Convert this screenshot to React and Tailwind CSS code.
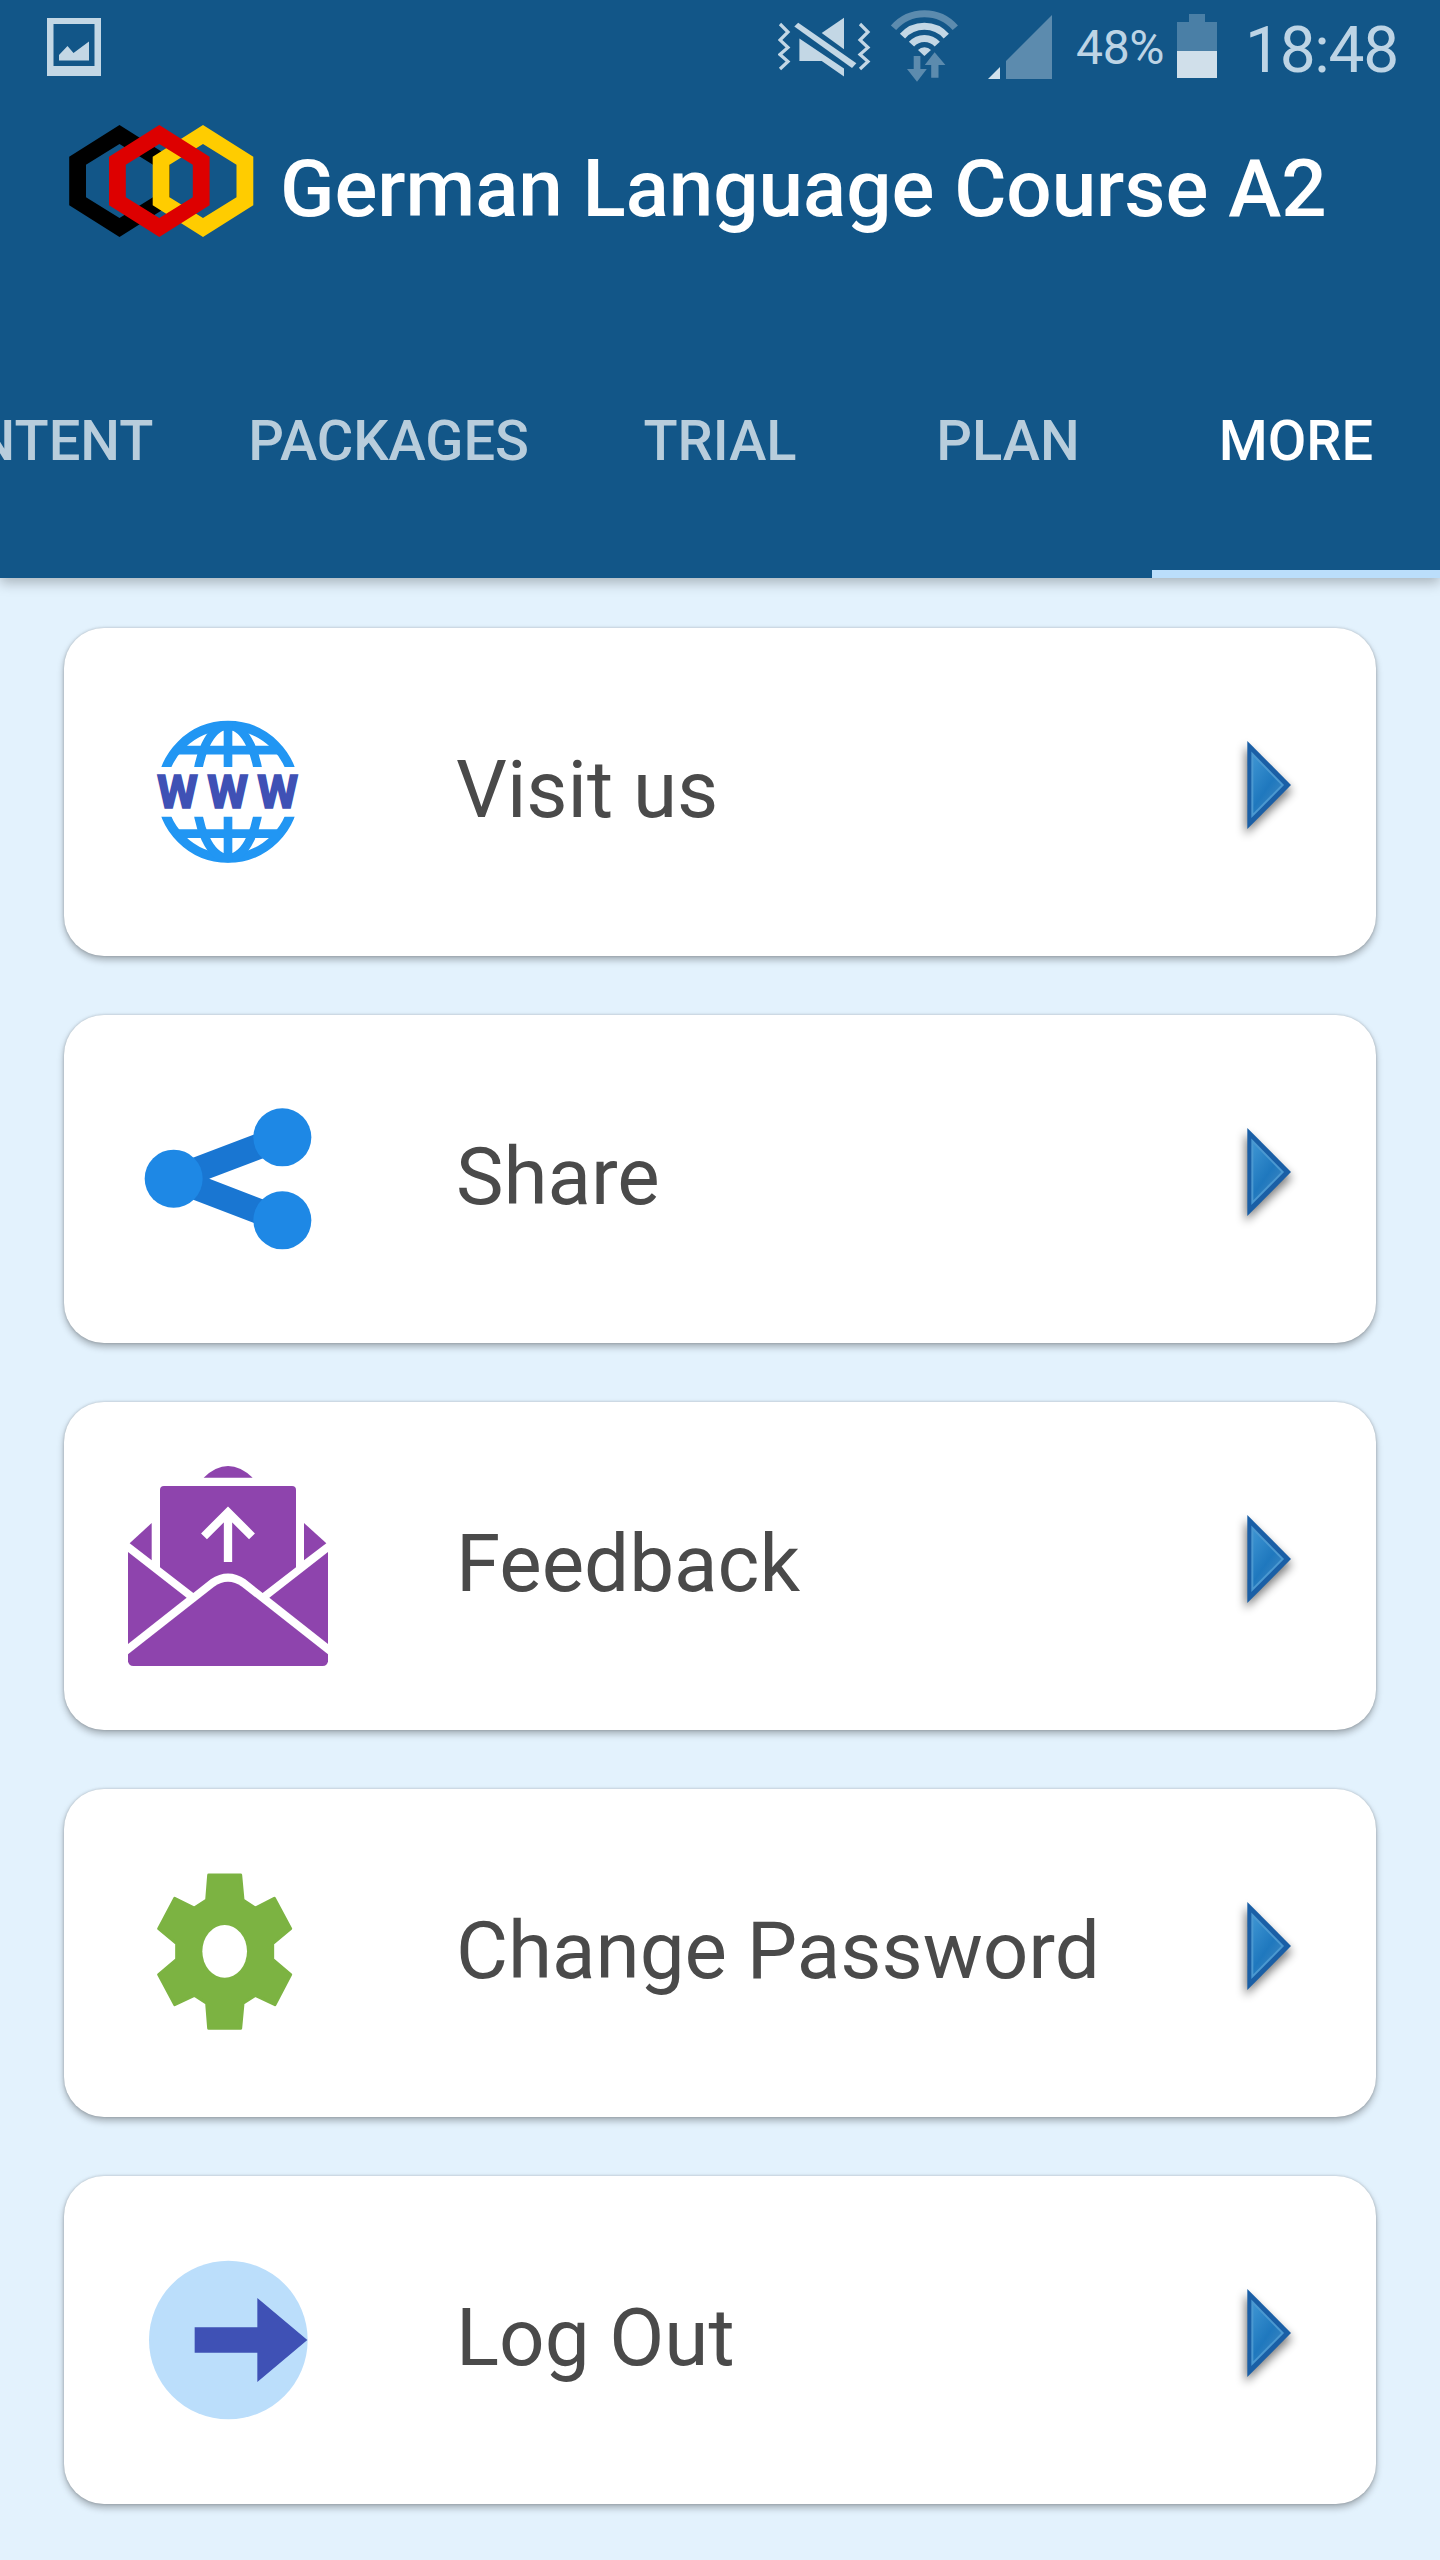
// src/App.jsx
const TABS = [
  { label: 'CONTENT', width: 'pl-12 pr-[47px]' },
  { label: 'PACKAGES', width: 'pl-12 pr-[47px]' },
  { label: 'TRIAL', width: 'w-72' },
  { label: 'PLAN', width: 'w-72' },
  { label: 'MORE', width: 'w-72', active: true },
];

function GalleryIcon() {
  return (
    <svg viewBox="0 0 54 58" className="w-[54px] h-[58px] ml-[46.5px] mt-[18px]" fill="#c3d7e5">
      <path fillRule="evenodd" d="M0 0H54V58H0ZM6.5 6V48H47.5V6Z" />
      <path d="M12 42.5V37L20.5 28L26.5 35L42 23.5V42.5Z" />
    </svg>
  );
}

function MuteIcon() {
  return (
    <svg viewBox="778 16 93 62" className="w-[93px] h-[62px] ml-[677.5px] mt-4" fill="#c3d7e5">
      <path
        d="M780 24L788 32L780 40L788 47.5L780 54.5L788 61.5L780 69M860 24L868 32L860 40L868 47.5L860 54.5L868 61.5L860 69"
        fill="none"
        stroke="#c3d7e5"
        strokeWidth="3.2"
      />
      <path d="M821.7 33L844 17.7V49.3Z" />
      <path d="M799.4 38.5L844 68.5V76.5L821.7 61H799.4Z" />
      <path d="M794.3 26.5L798.2 22.7L856.4 63.3L852 68Z" />
    </svg>
  );
}

function WifiIcon() {
  return (
    <svg viewBox="889 10 70 74" className="w-[70px] h-[74px] ml-[18px] mt-2.5" fill="#5c8bae">
      <g fill="none" strokeWidth="7">
        <path d="M893.5 27.8A41 41 0 0 1 955.3 27.8" stroke="#5c8bae" />
        <path d="M902.5 36.2A29.3 29.3 0 0 1 946.3 36.2" stroke="#c3d7e5" />
        <path d="M911.5 44.2A17.3 17.3 0 0 1 937.3 44.2" stroke="#c3d7e5" />
      </g>
      <path d="M918 50A9 9 0 0 1 931 50L924.4 55.9Z" fill="#c3d7e5" />
      <path d="M913.7 56H920.4V69H926.8L917 81.8L907 69H913.7Z" />
      <path d="M934.6 52.3L945.4 65H938.5V77.7H931.2V65H924.8Z" />
    </svg>
  );
}

function SignalIcon() {
  return (
    <svg viewBox="988 15 64 64" className="w-16 h-16 ml-[29px] mt-[15px]">
      <path d="M1006 61L1052 15V79H1006Z" fill="#5c8bae" />
      <path d="M988 79L1000 67V79Z" fill="#d2e1ec" />
    </svg>
  );
}

function BatteryIcon() {
  return (
    <svg viewBox="0 0 40 64" className="w-10 h-16 mt-3.5 mr-[28px]">
      <path d="M12 0H28V8H40V37H0V8H12Z" fill="#4a7fa6" />
      <path d="M0 37H40V64H0Z" fill="#d0dfea" />
    </svg>
  );
}

function Hexagon({ x, color }) {
  return (
    <path
      transform={`translate(${x} 0)`}
      fill={color}
      fillRule="evenodd"
      d="M0 0L50.3 31.7V80.3L0 112L-50.3 80.3V31.7ZM0 19L-33.5 39.7V72.3L0 93L33.5 72.3V39.7Z"
    />
  );
}

function Logo() {
  return (
    <svg viewBox="0 0 185 112" className="w-[185px] h-28 shrink-0">
      <Hexagon x={50.5} color="#000000" />
      <Hexagon x={134} color="#ffcc00" />
      <Hexagon x={90.3} color="#dd0000" />
    </svg>
  );
}

function WebIcon() {
  return (
    <svg viewBox="0 -54 780 780" className="size-[260px]">
      <clipPath id="globe-halves">
        <path d="M0 0H780V261H0ZM0 410H780V700H0Z" />
      </clipPath>
      <g clipPath="url(#globe-halves)" fill="none" stroke="#2196f3" strokeWidth="26">
        <circle cx="384" cy="335.5" r="199" strokeWidth="28" />
        <ellipse cx="384" cy="335.5" rx="95" ry="199" />
        <path d="M384 125V546M225 210.5H543M225 461H543" />
      </g>
      <text
        x="171 321.5 472"
        y="385"
        fill="#3f51b5"
        stroke="#3f51b5"
        strokeWidth="5"
        className="font-[Roboto,sans-serif] font-bold text-[140px]"
      >
        WWW
      </text>
    </svg>
  );
}

function ShareIcon() {
  return (
    <svg viewBox="0 -93 780 780" className="size-[260px]">
      <path d="M547 172L221 296L547 421" fill="none" stroke="#1976d2" strokeWidth="76" strokeLinejoin="round" />
      <g fill="#1e88e5">
        <circle cx="221" cy="296" r="87" />
        <circle cx="547" cy="172" r="87" />
        <circle cx="547" cy="421" r="87" />
      </g>
    </svg>
  );
}

function FeedbackIcon() {
  return (
    <svg viewBox="0 -12 780 780" className="size-[260px]" fill="#8e44ad">
      <path d="M311 113Q384 43 458 113Z" />
      <path d="M155 249V361L89 310Z" />
      <path d="M612 249V361L679 310Z" />
      <path d="M180 150Q180 138 192 138H576Q588 138 588 150V382L488 459L436 418Q384 383 332 418L280 459L180 382Z" />
      <path d="M84 336L260 473L84 612Z" />
      <path d="M684 336L508 473L684 612Z" />
      <path d="M84 643L342 440Q384 410 426 440L684 643V664Q682 678 668 678H100Q86 678 84 664Z" />
      <path d="M384 366V212M312 289L384 217L456 289" fill="none" stroke="#ffffff" strokeWidth="25" />
    </svg>
  );
}

function GearIcon() {
  return (
    <svg viewBox="0 -51 780 780" className="size-[260px]">
      <path
        d="M326 105H422L429 180L466 204L523 175L572 266L518 311V358L572 404L525 494L466 466L429 490L422 565H326L320 490L283 466L224 494L176 404L230 358V311L176 266L224 175L283 204L320 180Z"
        fill="#7cb342"
        stroke="#7cb342"
        strokeWidth="9"
        strokeLinejoin="round"
      />
      <ellipse cx="374" cy="334" rx="67" ry="79" fill="#ffffff" />
    </svg>
  );
}

function LogoutIcon() {
  return (
    <svg viewBox="0 -30 780 780" className="size-[260px]">
      <circle cx="385" cy="360" r="238" fill="#bbdefb" />
      <path d="M284 322H472V234L622 360L472 486V398H284Z" fill="#3f51b5" />
    </svg>
  );
}

function Arrow() {
  return (
    <svg viewBox="90 96 360 360" className="size-[120px] mr-[46px] ml-auto">
      <defs>
        <filter id="arrow-shadow" x="-50%" y="-50%" width="200%" height="200%">
          <feGaussianBlur stdDeviation="15" />
        </filter>
        <linearGradient id="arrow-fill" x1="0" y1="0" x2="0.7" y2="1">
          <stop offset="0" stopColor="#3f96d3" />
          <stop offset="0.6" stopColor="#1f78be" />
          <stop offset="1" stopColor="#4088c2" />
        </linearGradient>
      </defs>
      <path d="M196 138L336 272L196 404Z" fill="#000000" opacity="0.5" filter="url(#arrow-shadow)" />
      <path d="M202 123L333 255L202 387Z" fill="#1a5fa6" />
      <path d="M217 162L308 255L217 347Z" fill="url(#arrow-fill)" stroke="#4b98d0" strokeWidth="6" />
    </svg>
  );
}

const ITEMS = [
  { label: 'Visit us', Icon: WebIcon },
  { label: 'Share', Icon: ShareIcon },
  { label: 'Feedback', Icon: FeedbackIcon },
  { label: 'Change Password', Icon: GearIcon },
  { label: 'Log Out', Icon: LogoutIcon },
];

function StatusBar() {
  return (
    <div className="flex h-[125px] items-start text-[#bdd4e5] whitespace-nowrap">
      <GalleryIcon />
      <MuteIcon />
      <WifiIcon />
      <SignalIcon />
      <span className="ml-6 mt-6 w-[101px] text-[48px] leading-[48px] tracking-[-0.3px]">48%</span>
      <BatteryIcon />
      <span className="mt-[19px] text-[64px] leading-[64px] tracking-[-1.3px]">18:48</span>
    </div>
  );
}

export default function App() {
  return (
    <div className="w-[1440px] h-[2560px] overflow-hidden bg-[#e3f2fd] font-[Roboto,sans-serif]">
      <header className="flex h-[578px] flex-col bg-[#125688] shadow-[0_5px_12px_rgba(0,0,0,0.25)]">
        <StatusBar />
        <div className="flex h-28 pl-[69px]">
          <Logo />
          <h1 className="ml-[26px] mt-[17px] text-[80px] leading-[94px] font-medium tracking-[-0.04px] text-white whitespace-nowrap">
            German Language Course A2
          </h1>
        </div>
        <nav className="flex flex-1 justify-end overflow-hidden pt-[65px]">
          {TABS.map((tab) => (
            <div
              key={tab.label}
              className={`shrink-0 border-b-8 pt-[106px] text-center text-[56px] leading-[66px] font-medium ${tab.width} ${
                tab.active ? 'border-[#bbdefb] text-white' : 'border-transparent text-[#b8cddc]'
              }`}
            >
              {tab.label}
            </div>
          ))}
        </nav>
      </header>

      <main className="flex flex-col gap-[59px] px-16 pt-[50px]">
        {ITEMS.map(({ label, Icon }) => (
          <div
            key={label}
            className="flex h-[328px] items-center rounded-[40px] bg-white pl-9 shadow-[0_4px_7px_rgba(0,0,0,0.28),0_0_3px_rgba(0,0,0,0.2)]"
          >
            <Icon />
            <span className="ml-24 mb-1 text-[80px] leading-[94px] tracking-[-0.04px] text-[#4a4a4a] whitespace-nowrap">
              {label}
            </span>
            <Arrow />
          </div>
        ))}
      </main>
    </div>
  );
}
